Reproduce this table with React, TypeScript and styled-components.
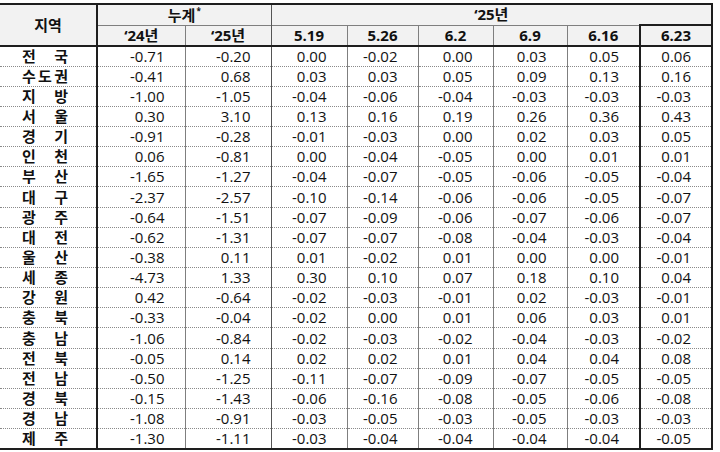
import React from "react";
import styled, { createGlobalStyle } from "styled-components";

const DARK = "#1e1e1e";
const GRAY = "#7f7f7f";
const DOT = "#8a8a8a";

const regions: [string, string[]][] = [
  ["전국", ["-0.71", "-0.20", "0.00", "-0.02", "0.00", "0.03", "0.05", "0.06"]],
  ["수도권", ["-0.41", "0.68", "0.03", "0.03", "0.05", "0.09", "0.13", "0.16"]],
  ["지방", ["-1.00", "-1.05", "-0.04", "-0.06", "-0.04", "-0.03", "-0.03", "-0.03"]],
  ["서울", ["0.30", "3.10", "0.13", "0.16", "0.19", "0.26", "0.36", "0.43"]],
  ["경기", ["-0.91", "-0.28", "-0.01", "-0.03", "0.00", "0.02", "0.03", "0.05"]],
  ["인천", ["0.06", "-0.81", "0.00", "-0.04", "-0.05", "0.00", "0.01", "0.01"]],
  ["부산", ["-1.65", "-1.27", "-0.04", "-0.07", "-0.05", "-0.06", "-0.05", "-0.04"]],
  ["대구", ["-2.37", "-2.57", "-0.10", "-0.14", "-0.06", "-0.06", "-0.05", "-0.07"]],
  ["광주", ["-0.64", "-1.51", "-0.07", "-0.09", "-0.06", "-0.07", "-0.06", "-0.07"]],
  ["대전", ["-0.62", "-1.31", "-0.07", "-0.07", "-0.08", "-0.04", "-0.03", "-0.04"]],
  ["울산", ["-0.38", "0.11", "0.01", "-0.02", "0.01", "0.00", "0.00", "-0.01"]],
  ["세종", ["-4.73", "1.33", "0.30", "0.10", "0.07", "0.18", "0.10", "0.04"]],
  ["강원", ["0.42", "-0.64", "-0.02", "-0.03", "-0.01", "0.02", "-0.03", "-0.01"]],
  ["충북", ["-0.33", "-0.04", "-0.02", "0.00", "0.01", "0.06", "0.03", "0.01"]],
  ["충남", ["-1.06", "-0.84", "-0.02", "-0.03", "-0.02", "-0.04", "-0.03", "-0.02"]],
  ["전북", ["-0.05", "0.14", "0.02", "0.02", "0.01", "0.04", "0.04", "0.08"]],
  ["전남", ["-0.50", "-1.25", "-0.11", "-0.07", "-0.09", "-0.07", "-0.05", "-0.05"]],
  ["경북", ["-0.15", "-1.43", "-0.06", "-0.16", "-0.08", "-0.05", "-0.06", "-0.08"]],
  ["경남", ["-1.08", "-0.91", "-0.03", "-0.05", "-0.03", "-0.05", "-0.03", "-0.03"]],
  ["제주", ["-1.30", "-1.11", "-0.03", "-0.04", "-0.04", "-0.04", "-0.04", "-0.05"]],
];

const weeks = ["5.19", "5.26", "6.2", "6.9", "6.16", "6.23"];
const colWidths = [97, 88, 86, 76, 71, 75, 74, 73, 72];

// which left border each column gets
const leftLine = (i: number) => {
  if (i === 1) return `2px solid ${DARK}`;
  if (i === 3) return `1.5px solid #555`;
  if (i === 8) return `2px solid ${DARK}`;
  return `1px solid ${GRAY}`;
};

const GlobalStyle = createGlobalStyle`
  html, body {
    margin: 0;
    padding: 0;
    background: #fff;
  }
  body {
    font-family: "Open Sans", "Noto Sans CJK KR", sans-serif;
    color: #111;
  }
`;

const Page = styled.div`
  padding-top: 3px;
  width: 720px;
`;

const Table = styled.table`
  border-collapse: collapse;
  table-layout: fixed;
  width: 712px;
  font-size: 15px;
  border-top: 2px solid ${DARK};
  border-bottom: 2px solid ${DARK};
  border-right: 2px solid ${DARK};
`;

const Col = styled.col<{ $w: number }>`
  width: ${(p) => p.$w}px;
`;

const HeadRow = styled.tr`
  height: 21px;
`;

const Th = styled.th<{ $left?: string; $topDark?: boolean; $bottom?: boolean }>`
  background: #f2f2f2;
  font-weight: 700;
  line-height: 1;
  padding: 0;
  text-align: center;
  vertical-align: middle;
  border-left: ${(p) => p.$left || "none"};
  border-top: ${(p) => (p.$topDark ? `2px solid ${DARK}` : `1px solid ${GRAY}`)};
  border-bottom: ${(p) => (p.$bottom ? `2px solid ${DARK}` : "none")};
`;

const Sup = styled.sup`
  font-size: 8px;
  vertical-align: 7px;
  margin-left: 1px;
`;

const Row = styled.tr`
  height: 20.15px;
`;

const NameCell = styled.td`
  padding: 0;
  border-bottom: 1px dotted ${DOT};
  vertical-align: middle;
`;

const Name = styled.div`
  width: 46px;
  margin-left: 22px;
  display: flex;
  justify-content: space-between;
  font-weight: 700;
  line-height: 1;
`;

const Td = styled.td<{ $left: string }>`
  padding: 0 20px 0 0;
  text-align: right;
  line-height: 1;
  vertical-align: middle;
  border-left: ${(p) => p.$left};
  border-bottom: 1px dotted ${DOT};
  white-space: nowrap;
`;

const App = () => {
  return (
    <Page>
      <GlobalStyle />
      <Table>
        <colgroup>
          {colWidths.map((w, i) => (
            <Col key={i} $w={w} />
          ))}
        </colgroup>
        <thead>
          <HeadRow>
            <Th rowSpan={2} $topDark $bottom>
              지역
            </Th>
            <Th colSpan={2} $left={leftLine(1)} $topDark>
              누계<Sup>*</Sup>
            </Th>
            <Th colSpan={6} $left={leftLine(3)} $topDark>
              ‘25년
            </Th>
          </HeadRow>
          <HeadRow>
            <Th $left={leftLine(1)} $bottom>
              ‘24년
            </Th>
            <Th $left={leftLine(2)} $bottom>
              ‘25년
            </Th>
            {weeks.map((w, i) => (
              <Th key={w} $left={leftLine(i + 3)} $topDark={i === 5} $bottom>
                {w}
              </Th>
            ))}
          </HeadRow>
        </thead>
        <tbody>
          {regions.map(([name, vals]) => (
            <Row key={name}>
              <NameCell>
                <Name>
                  {name.split("").map((c, k) => (
                    <span key={k}>{c}</span>
                  ))}
                </Name>
              </NameCell>
              {vals.map((v, i) => (
                <Td key={i} $left={leftLine(i + 1)}>
                  {v}
                </Td>
              ))}
            </Row>
          ))}
        </tbody>
      </Table>
    </Page>
  );
};

export default App;
